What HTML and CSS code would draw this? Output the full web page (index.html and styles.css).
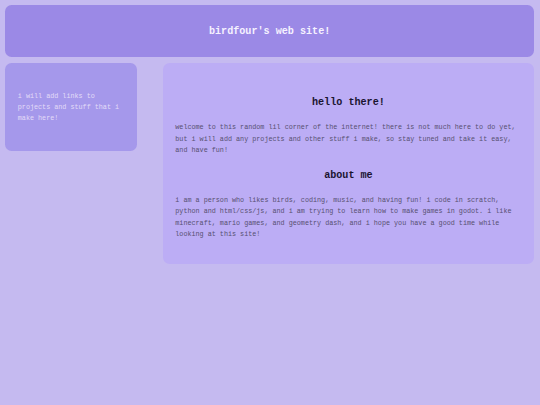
FILE: index.html
```html
<!DOCTYPE html>
<html lang="en">
<head>
<meta charset="utf-8">
<title>birdfour's web site!</title>
<link rel="stylesheet" href="styles.css">
</head>
<body>
<header class="site-header">
  <h1 class="site-title">birdfour's web site!</h1>
</header>
<div class="layout">
  <aside class="sidebar">
    <p>i will add links to projects and stuff that i make here!</p>
  </aside>
  <main class="content">
    <h2 class="heading">hello there!</h2>
    <p class="text">welcome to this random lil corner of the internet! there is not much here to do yet, but i will add any projects and other stuff i make, so stay tuned and take it easy, and have fun!</p>
    <h2 class="heading">about me</h2>
    <p class="text">i am a person who likes birds, coding, music, and having fun! i code in scratch, python and html/css/js, and i am trying to learn how to make games in godot. i like minecraft, mario games, and geometry dash, and i hope you have a good time while looking at this site!</p>
  </main>
</div>
</body>
</html>
```
FILE: styles.css
```css
html {
  background: #c5baf0;
}
body {
  margin: 0;
  padding: 4.7px 6px 0 5.3px;
  font-family: "Liberation Mono", "Courier New", monospace;
  font-size: 6.75px;
  line-height: 11.25px;
}
.site-header {
  background: #9b89e6;
  border-radius: 6.5px;
  height: 52px;
  box-sizing: border-box;
  padding-top: 3px;
  display: flex;
  align-items: center;
  justify-content: center;
}
.site-title {
  margin: 0;
  color: #f6f2ff;
  font-size: 10.125px;
  line-height: 12px;
  font-weight: bold;
}
.layout {
  display: grid;
  grid-template-columns: 132px 1fr;
  gap: 25.5px;
  margin-top: 6px;
  align-items: start;
}
.sidebar {
  background: #a598eb;
  border-radius: 6.5px;
  padding: 28.2px 12.5px 26px;
  color: #e3dcf8;
}
.sidebar p {
  margin: 0;
}
.content {
  background: #bcadf5;
  border-radius: 6.5px;
  padding: 34.3px 12.5px 24px;
  display: flex;
  flex-direction: column;
  gap: 13.8px;
}
.heading {
  margin: 0;
  text-align: center;
  color: #1a1430;
  font-size: 10.125px;
  line-height: 11.5px;
  font-weight: bold;
}
.text {
  margin: 0;
  color: #575070;
}
```
